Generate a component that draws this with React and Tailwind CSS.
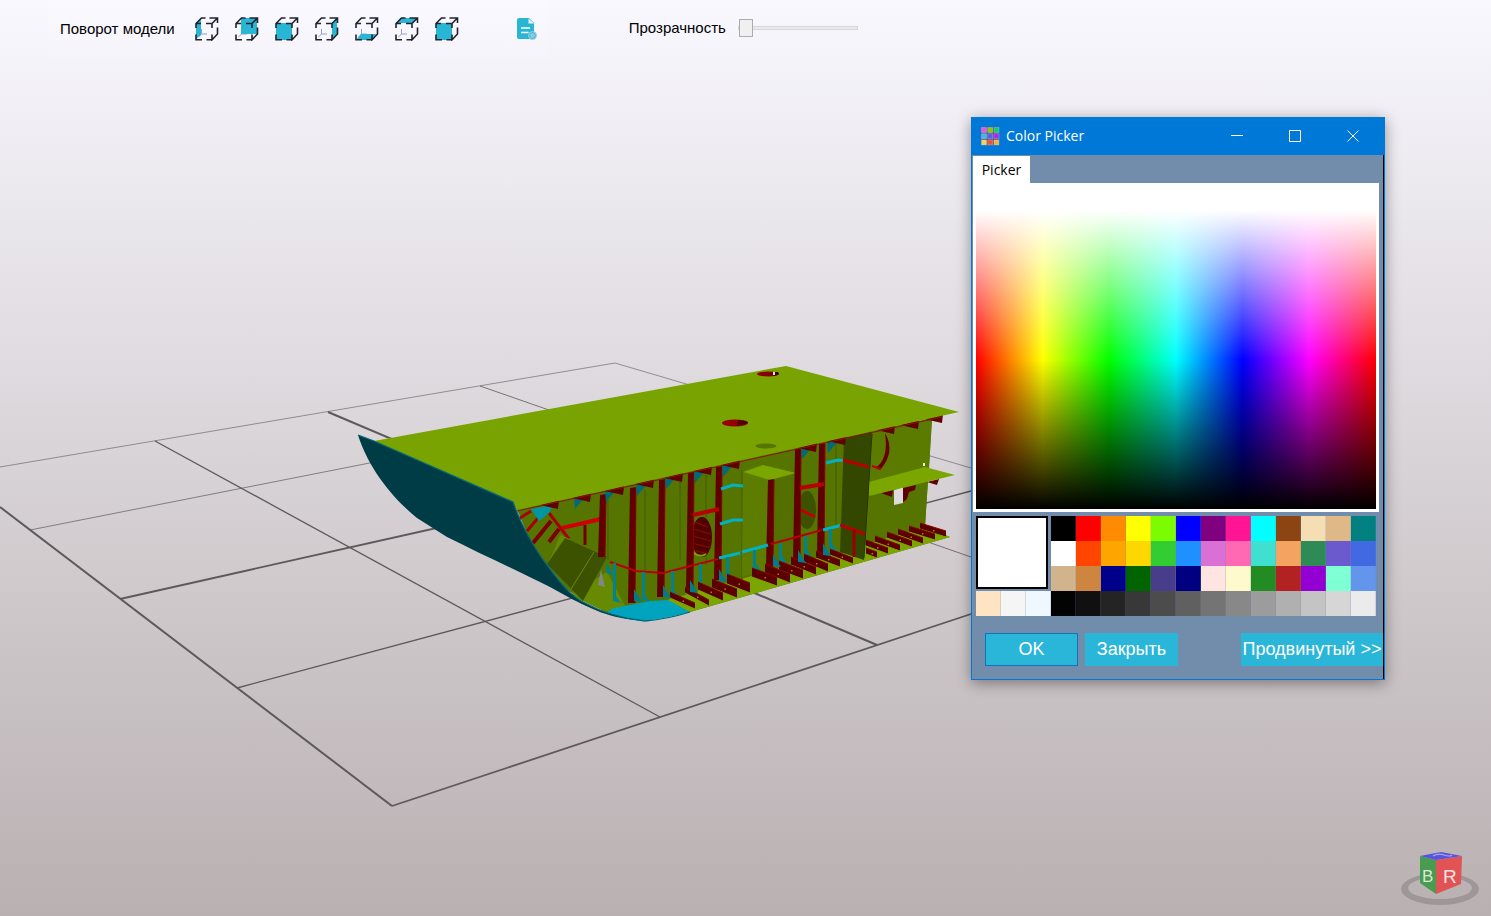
import { useState } from "react";

const FACES = {
  left: "1,6 6,1 6,18 1,22",
  back: "6,1 22,1 22,17 6,17",
  front: "1,6 17,6 17,23 1,23",
  right: "17,6 22,1 22,17 17,22",
  bottom: "1,23 6,17 21,17 17,23",
  top: "1,6 6,1 22,1 17,6",
};

const VIEWS = [
  { face: "left", label: "Слева" },
  { face: "back", label: "Сзади" },
  { face: "front", label: "Спереди" },
  { face: "right", label: "Справа" },
  { face: "bottom", label: "Снизу" },
  { face: "top", label: "Сверху" },
  { face: "front", label: "Изометрия" },
];

function CubeIcon({ face }) {
  return (
    <svg viewBox="0 0 24 24" className="size-6" fill="none" aria-hidden="true">
      <path d="M6.500 12V17H12M6.500 17L3.500 20" stroke="#98a0c4" strokeWidth="1" />
      <polygon points={FACES[face]} fill="#29b6d4" />
      <path
        d="M1 11V6.500L6.500 1H10.500M1 6.500H6M11 6.500H17V11M17 6.500L22.500 1M14.500 1H22.500V6M22.500 10.500V17L17 22.800V17.500M17 22.800H11.500M7 22.800H1V17.500"
        stroke="#20242f"
        strokeWidth="1.6"
      />
    </svg>
  );
}

function ReportIcon() {
  return (
    <svg viewBox="0 0 24 24" className="size-6" aria-hidden="true">
      <path d="M4 1H14L19 6V20a2 2 0 0 1-2 2H4a2 2 0 0 1-2-2V3a2 2 0 0 1 2-2Z" fill="#29b6d4" />
      <path d="M13.500 1.500V6.500H19Z" fill="#fff" opacity=".9" />
      <path d="M6 11H15M6 15.500H13.500" stroke="#fff" strokeWidth="1.500" />
      <circle cx="17.500" cy="18.500" r="4" fill="#58bcd5" stroke="#9bd3e4" strokeWidth="1" />
      <circle cx="17.500" cy="18.500" r="1.700" fill="#7ac9dc" stroke="#a9dce9" strokeWidth=".7" />
    </svg>
  );
}

const GRID_LINES = [
  [0, 507, 392, 806, 2],
  [392, 806, 971, 614, 1.8],
  [0, 467, 615, 363, 0.6],
  [615, 363, 971, 468, 0.6],
  [480, 386, 971, 557, 0.8],
  [328, 412, 877, 645, 2],
  [155, 441, 660, 717, 1.3],
  [30, 530, 400, 457, 0.7],
  [120, 599, 450, 525, 1.8],
  [237, 688, 971, 491, 1.3],
];

const FRAMES = [
  [599, 495, 557], [629, 488, 603], [658, 480, 597], [687, 473, 592],
  [715, 467, 580], [767, 480, 567], [794, 449, 563], [818, 444, 553],
];

const RIBS = [
  [920, 523, 946, 531, 6], [909, 526, 935, 534, 6], [898, 529, 923, 538, 6],
  [887, 532, 912, 541, 6], [875, 536, 900, 545, 6], [866, 540, 888, 548, 6],
  [866, 548, 877, 552, 6], [830, 549, 853, 558, 6], [816, 551, 840, 560, 7],
  [804, 554, 828, 564, 8], [791, 557, 816, 567, 8], [779, 561, 803, 570, 9],
  [765, 564, 790, 574, 9], [752, 568, 777, 577, 9], [727, 574, 750, 583, 10],
  [712, 579, 737, 589, 9], [698, 582, 723, 593, 8], [685, 587, 709, 600, 6],
  [670, 592, 695, 603, 6],
];

const POSTS = [
  [613, 563, 600], [642, 572, 599], [671, 571, 594], [699, 564, 587], [726, 557, 576],
  [753, 550, 568], [779, 543, 560], [804, 536, 554], [829, 529, 548],
];

const GUSSETS = [
  [634, 589], [663, 585], [690, 580], [719, 569], [773, 554], [798, 550], [823, 543],
];

const DECK_TEETH = [
  [548, 506], [580, 499], [613, 492], [643, 485], [672, 479], [701, 472], [729, 466],
  [806, 449], [835, 442], [884, 431], [908, 426], [932, 420],
];

const DECK_GUSSETS = [
  [574, 500], [605, 493], [636, 487], [665, 480], [694, 474], [722, 468], [801, 450], [827, 444],
];

function Scene() {
  return (
    <svg
      viewBox="0 0 1491 916"
      preserveAspectRatio="xMinYMin slice"
      className="absolute inset-0 size-full"
      role="img"
      aria-label="Модель корпуса"
    >
      <g stroke="#5c595b">
        {GRID_LINES.map(([x1, y1, x2, y2, w], i) => (
          <line key={i} x1={x1} y1={y1} x2={x2} y2={y2} strokeWidth={w} />
        ))}
      </g>

      <polygon points="515,505 932,418 925,527 950,537 690,612 640,620 606,612 567,590 533,547" fill="#567500" />
      <polygon points="570,595 607,572 625,606 606,612" fill="#668b00" />
      <polygon points="660,602 925,527 950,537 690,612" fill="#7ba600" />
      <polygon points="655,600 735,572 850,552 866,545 922,526 915,522 640,590" fill="#567500" />
      <path d="M607 612L614 608L650 601L668 600L690 612Q665 619 640 621Q618 618 607 612Z" fill="#00a3bd" />

      <path d="M608 500V560M645 490V570M680 482V560M706 475V565M836 442V525M742 470V580" stroke="#445d00" strokeWidth="1" />

      <g fill="none" stroke="#a80000" strokeWidth="3">
        <path d="M517 520L531 511M527 531L538 518" />
        <path d="M533 543L551 521M549 542L559 529" stroke="#7d0000" strokeWidth="4" />
        <path d="M549 513L569 539" />
        <path d="M562 528L605 518" stroke="#d00000" strokeWidth="4" />
        <path d="M585 525V545" stroke="#700000" />
      </g>
      <polygon points="531,509 553,505 549,513 539,521" fill="#0097a4" />
      <polygon points="547,564 554,551 560,535 570,539" fill="#668b00" />
      <polygon points="565,538 607,557 583,601 547,564" fill="#3d5200" />
      <path d="M594 552L571 589" stroke="#668b00" strokeWidth="1" />
      <polygon points="601,570 605,587 598,585" fill="#858585" />
      <polygon points="607,563 613,575 606,573" fill="#00808c" />

      <ellipse cx="702" cy="537" rx="10" ry="20" fill="#520000" />
      <path d="M694 522L708 527M693 529L711 534M692 536L711 541M692 543L711 548M693 550L708 554" stroke="#881000" strokeWidth="1" />
      <path d="M694 553Q700 558 706 554" stroke="#7ba600" strokeWidth="2" fill="none" />
      <ellipse cx="807" cy="510" rx="9" ry="19" fill="#3d5200" />
      <path d="M801 510L815 517" stroke="#c00000" strokeWidth="3" />

      <polygon points="743,472 770,480 768,570 742,577" fill="#5c7d00" />
      <polygon points="770,480 796,473 794,560 770,567" fill="#536f00" />
      <polygon points="743,472 763,465 796,473 770,480" fill="#7ba600" />

      {FRAMES.map(([x, top, bottom]) => (
        <g key={x}>
          <polygon points={`${x + 1},${top} ${x + 7},${top - 1} ${x + 6},${bottom} ${x - 1},${bottom}`} fill="#600000" />
          <line x1={x + 7} y1={top} x2={x + 6} y2={bottom} stroke="#8a0000" strokeWidth="1" />
        </g>
      ))}

      <g fill="none" stroke="#b80000" strokeWidth="2">
        <path d="M610 562L636 571L663 573L718 559M771 544L822 530" />
        <path d="M693 515L719 509M800 488L824 484" strokeWidth="4" />
      </g>
      <g stroke="#00b2c6" strokeWidth="3" fill="none">
        <path d="M721 489L733 485L743 486M720 524L733 520L743 520M826 463L838 460L848 461" />
        <path d="M719 558L740 553M742 552L768 545M823 530L842 525" />
      </g>
      <polygon points="844,438 872,432 864,560 840,552" fill="#344700" />
      <path d="M843 460L869 467M840 525L865 534" stroke="#b80000" strokeWidth="3" />
      <path d="M854 530V557" stroke="#980000" strokeWidth="3" />

      <polygon points="872,433 932,419 929,469 869,484" fill="#5a7b00" />
      <path d="M885 433Q896 452 880 470L875 468Q889 460 885 433Z" fill="#680000" />
      <path d="M872 466L881 469" stroke="#b80000" strokeWidth="2" />
      <polygon points="869,494 928,479 925,526 866,543" fill="#567500" />
      <polygon points="894,490 903,487 903,503 894,505" fill="#dedadd" />
      <polygon points="881,493 893,490 892,497" fill="#600000" />
      <polygon points="903,488 916,485 915,490 909,492 907,499 903,502" fill="#600000" />
      <polygon points="927,482 939,479 937,485" fill="#600000" />
      <polygon points="869,482 925,467 955,475 869,496" fill="#7ba600" />
      <rect x="923" y="463" width="2" height="3" fill="#f5f0e0" />
      <path d="M864 558L872 434" stroke="#263600" strokeWidth="1" />

      <g fill="#008290">
        {POSTS.map(([x, top, bottom]) => (
          <path key={x} d={`M${x} ${top}H${x + 3}V${bottom - 4}L${x + 8} ${bottom + 3}L${x} ${bottom + 1}Z`} />
        ))}
      </g>
      {RIBS.map(([x1, y1, x2, y2, h]) => (
        <g key={`${x1}-${y1}`}>
          <polygon points={`${x1},${y1} ${x2},${y2} ${x2},${y2 + h} ${x1},${y1 + h}`} fill="#5a0000" />
          <line x1={x1} y1={y1 + h} x2={x2} y2={y2 + h} stroke="#7ba600" strokeWidth="1" />
          <line x1={x1} y1={y1} x2={x2} y2={y2} stroke="#850500" strokeWidth="1" />
          <rect x={(x1 + x2) / 2} y={(y1 + y2) / 2 + h / 2} width="1.500" height="1.500" fill="#c07800" />
        </g>
      ))}
      <g fill="#007a8c">
        {GUSSETS.map(([x, y]) => (
          <polygon key={x} points={`${x},${y} ${x + 8},${y + 13} ${x},${y + 12}`} />
        ))}
      </g>
      <g fill="#006b78">
        {DECK_GUSSETS.map(([x, y]) => (
          <polygon key={x} points={`${x},${y - 3} ${x + 13},${y - 5} ${x + 6},${y + 3} ${x + 1},${y + 9}`} />
        ))}
      </g>
      <g fill="#600000">
        {DECK_TEETH.map(([x, y]) => (
          <polygon key={x} points={`${x - 8},${y - 1} ${x + 11},${y - 6} ${x + 10},${y + 3}`} />
        ))}
      </g>

      <path d="M517 511L942 417" stroke="#8a1500" strokeWidth="1" />
      <polygon points="374,441 786,366 959,412 517,510 512,502" fill="#79a300" />
      <ellipse cx="768" cy="374" rx="11" ry="2.500" fill="#850000" />
      <path d="M771 372h7l1 2-5 2z" fill="#400000" />
      <rect x="773" y="372" width="2" height="3" fill="#f5e9e4" />
      <ellipse cx="735" cy="423" rx="13" ry="3.500" fill="#980000" />
      <path d="M738 420Q752 421 746 424L737 426Z" fill="#500000" />
      <ellipse cx="766" cy="446" rx="10.500" ry="2.500" fill="#567500" />

      <path
        d="M358 435L374 441L513 502C520 522 533 547 547 565C562 585 570 595 583 602C600 611 615 617 640 620C610 619 590 608 570 598L550 587C520 572 485 556 447 537L417 518C395 500 370 472 358 435Z"
        fill="#003c46"
      />
      <path
        d="M358 435L374 441L513 502C520 522 533 547 547 565C562 585 570 595 583 602C605 614 625 619 645 621Q668 619 690 612"
        fill="none"
        stroke="#00687a"
        strokeWidth="1.300"
      />
    </svg>
  );
}

function NavigationCube() {
  return (
    <svg viewBox="0 0 82 60" className="absolute right-2.5 bottom-2 h-15 w-20.5" role="img" aria-label="Ориентация модели">
      <path
        fillRule="evenodd"
        fill="#9d9798"
        d="M2 41a39 16 0 1 0 78 0a39 16 0 1 0-78 0ZM9 40a32 11 0 1 1 64 0a32 11 0 1 1-64 0Z"
      />
      <polygon points="21,8 37,12 37,46 21,35" fill="#499b50" />
      <polygon points="37,12 63,8 62,36 37,46" fill="#e25355" />
      <polygon points="21,8 42,4 63,8 37,12" fill="#5854dd" />
      <path d="M34 8q5-3 11-1t8 0" stroke="#aaa5ef" strokeWidth="1.200" fill="none" />
      <text x="23" y="34" fontFamily="Liberation Sans, sans-serif" fontSize="17" fill="#d9e8da">B</text>
      <text x="44" y="35" fontFamily="Liberation Sans, sans-serif" fontSize="19" fill="#f7e4e4">R</text>
    </svg>
  );
}

const SWATCHES = [
  ["#000000", "#ff0000", "#ff8c00", "#ffff00", "#7cfc00", "#0000ff", "#800080", "#ff1493", "#00ffff", "#8b4513", "#f5deb3", "#deb887", "#008080"],
  ["#ffffff", "#ff4500", "#ffa500", "#ffd700", "#32cd32", "#1e90ff", "#da70d6", "#ff69b4", "#40e0d0", "#f4a460", "#2e8b57", "#6a5acd", "#4169e1"],
  ["#d2b48c", "#cd853f", "#00008b", "#006400", "#483d8b", "#000080", "#ffe4e1", "#fffacd", "#228b22", "#b22222", "#9400d3", "#7fffd4", "#6495ed"],
  ["#ffe4c4", "#f5f5f5", "#f0f8ff", "#030303", "#101010", "#242424", "#383838", "#4c4c4c", "#606060", "#747474", "#888888", "#9c9c9c", "#b0b0b0", "#c4c4c4", "#d6d6d6", "#ebebeb"],
].flat();

const APP_ICON = ["#e05af0", "#8cc414", "#16c878", "#46b4f0", "#5560f0", "#a828f0", "#f5d25a", "#f05038", "#f0b43c"];

function ColorPicker() {
  const [color, setColor] = useState("#ffffff");
  return (
    <section
      aria-label="Color Picker"
      className="absolute top-[117px] right-[106px] flex w-[414px] flex-col border border-[#0078d7] bg-[#728cab] shadow-[0_3px_14px_rgba(0,0,0,0.4)]"
    >
      <header className="flex h-[37px] items-center bg-[#0078d7] pr-0.5 pb-0.5 pl-2 text-white">
        <svg viewBox="0 0 20 20" className="size-5" aria-hidden="true">
          <rect x="1" y="1" width="18" height="18" fill="#39406b" />
          {APP_ICON.map((c, i) => (
            <rect key={c} x={1.5 + (i % 3) * 6.2} y={1.5 + Math.floor(i / 3) * 6.2} width="5" height="5" fill={c} stroke="#fff" strokeOpacity=".35" strokeWidth=".8" />
          ))}
        </svg>
        <h2 className="ml-1.5 grow font-['Open_Sans','Noto_Sans',sans-serif] text-sm">Color Picker</h2>
        {[
          ["Свернуть", "M1 6.500H13"],
          ["Развернуть", "M1.500 1.500H12.500V12.500H1.500Z"],
          ["Закрыть окно", "M1.500 1.500L12.500 12.500M12.500 1.500L1.500 12.500"],
        ].map(([label, d]) => (
          <button key={label} type="button" aria-label={label} className="flex h-full w-[58px] items-center justify-center">
            <svg viewBox="0 0 14 14" className="size-3.5" fill="none" stroke="#fff" strokeWidth="1">
              <path d={d} />
            </svg>
          </button>
        ))}
      </header>

      <div className="border-r border-black">
        <div role="tablist" className="flex h-7 pt-px pl-px">
          <button
            type="button"
            role="tab"
            aria-selected="true"
            className="w-[57px] bg-white font-['Open_Sans','Noto_Sans',sans-serif] text-sm text-black"
          >
            Picker
          </button>
        </div>
        <div role="tabpanel" aria-label="Picker" className="mr-1 ml-px bg-white px-[3px] pt-[27px] pb-[3px]">
          <div className="h-[299px] bg-[linear-gradient(to_bottom,#fff,rgba(255,255,255,0)_50%,rgba(0,0,0,0)_50%,#000),linear-gradient(to_right,#f00,#ff0,#0f0,#0ff,#00f,#f0f,#f00)]" />
        </div>

        <div className="mt-1 mr-[7px] ml-1 grid auto-rows-[25px] grid-cols-[repeat(16,minmax(0,1fr))]">
          <div className="col-span-3 row-span-3 mr-[3px] mb-[2px] border-2 border-black bg-white" style={{ backgroundColor: color }} />
          {SWATCHES.map((c) => (
            <button key={c} type="button" aria-label={c} onClick={() => setColor(c)} className="border-r border-[#728cab]/25" style={{ backgroundColor: c }} />
          ))}
        </div>

        <div className="mt-[17px] mb-[13px] flex gap-[7px] pl-[13px] font-['Liberation_Sans',sans-serif] text-lg text-white">
          <button type="button" className="h-[33px] w-[93px] border border-[#1172bd] bg-[#29b6d8] pb-0.5">OK</button>
          <button type="button" className="h-[33px] w-[93px] bg-[#29b6d8] pb-0.5">Закрыть</button>
          <button type="button" className="ml-auto h-[33px] w-[142px] whitespace-nowrap bg-[#29b6d8] pb-0.5">Продвинутый &gt;&gt;</button>
        </div>
      </div>
    </section>
  );
}

export default function App() {
  const [opacity, setOpacity] = useState(0);
  return (
    <main className="relative min-h-screen overflow-hidden bg-linear-to-b from-[#f9f8ff] to-[#b9b0b1] font-['Liberation_Sans',sans-serif] text-[15px] text-black">
      <Scene />
      <div className="relative flex h-14 items-start pl-12">
        <div className="flex h-[58px] items-center bg-white/15 pr-2 pl-3">
          <span>Поворот модели</span>
          <div className="ml-5 flex gap-4">
            {VIEWS.map(({ face, label }) => (
              <button key={label} type="button" aria-label={label}>
                <CubeIcon face={face} />
              </button>
            ))}
          </div>
          <button type="button" aria-label="Отчёт" className="ml-14">
            <ReportIcon />
          </button>
        </div>
        <label className="ml-[82px] flex h-14 items-center gap-3">
          <span>Прозрачность</span>
          <input
            type="range"
            min="0"
            max="100"
            value={opacity}
            onChange={(e) => setOpacity(Number(e.target.value))}
            className="h-5 w-[120px] appearance-none bg-transparent [&::-webkit-slider-runnable-track]:h-1 [&::-webkit-slider-runnable-track]:border [&::-webkit-slider-runnable-track]:border-[#d6d6d6] [&::-webkit-slider-runnable-track]:bg-[#e7eaea] [&::-webkit-slider-thumb]:-mt-2 [&::-webkit-slider-thumb]:h-[18px] [&::-webkit-slider-thumb]:w-3.5 [&::-webkit-slider-thumb]:appearance-none [&::-webkit-slider-thumb]:border [&::-webkit-slider-thumb]:border-[#acacac] [&::-webkit-slider-thumb]:bg-[#f0f0f0]"
          />
        </label>
      </div>
      <ColorPicker />
      <NavigationCube />
    </main>
  );
}
